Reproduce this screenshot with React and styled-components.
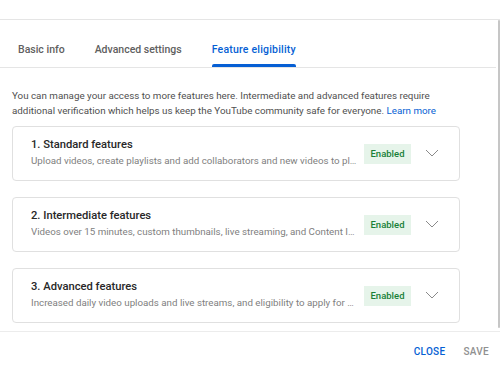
import React from 'react';
import styled, { createGlobalStyle } from 'styled-components';

const GlobalStyle = createGlobalStyle`
  html, body {
    margin: 0;
    padding: 0;
    background: #fff;
  }
  body {
    font-family: Roboto, "Liberation Sans", Arial, sans-serif;
    -webkit-font-smoothing: antialiased;
  }
`;

const Dialog = styled.div`
  width: 500px;
  height: 370px;
  display: flex;
  flex-direction: column;
  background: #fff;
  overflow: hidden;
`;

const TopBar = styled.div`
  height: 19px;
  flex-shrink: 0;
  border-bottom: 1px solid #e5e5e5;
`;

const Body = styled.div`
  display: flex;
  height: 310px;
  flex-shrink: 0;
`;

const Main = styled.div`
  flex: 1;
  min-width: 0;
  display: flex;
  flex-direction: column;
`;

const ScrollTrack = styled.div`
  width: 4px;
  display: flex;
  justify-content: flex-end;
`;

const ScrollThumb = styled.div`
  width: 2px;
  height: 308px;
  background: #c6c6c6;
  border-radius: 1px;
`;

const TabBar = styled.div`
  height: 47px;
  display: flex;
  gap: 30px;
  padding-left: 18px;
  border-bottom: 1px solid #e5e5e5;
`;

const Tab = styled.div`
  position: relative;
  display: flex;
  align-items: center;
  padding-top: 11px;
  font-size: 10.5px;
  font-weight: 500;
  letter-spacing: ${(p) => (p.$active ? '0.2px' : '0')};
  color: ${(p) => (p.$active ? '#065fd4' : '#606060')};

  &::after {
    content: '';
    display: ${(p) => (p.$active ? 'block' : 'none')};
    position: absolute;
    left: 0;
    right: 0;
    bottom: 0;
    height: 3px;
    background: #065fd4;
    border-radius: 2px 2px 0 0;
  }
`;

const Content = styled.div`
  padding: 20px 36px 0 12px;
  display: flex;
  flex-direction: column;
`;

const Intro = styled.p`
  margin: 0 0 8px;
  font-size: 9.8px;
  line-height: 15px;
  color: #505050;
`;

const Link = styled.a`
  color: #065fd4;
  text-decoration: none;
`;

const CardList = styled.div`
  display: flex;
  flex-direction: column;
  gap: 16px;
`;

const Card = styled.div`
  height: 55px;
  box-sizing: border-box;
  border: 1px solid #e0e0e0;
  border-radius: 4px;
  display: flex;
  align-items: center;
  padding: 0 20px 0 18px;
`;

const CardText = styled.div`
  flex: 1;
  min-width: 0;
  display: flex;
  flex-direction: column;
  gap: 2px;
  margin-top: -2px;
`;

const CardTitle = styled.div`
  font-size: 11.2px;
  font-weight: 500;
  line-height: 15px;
  color: #282828;
`;

const CardDesc = styled.div`
  font-size: 9.75px;
  line-height: 14px;
  color: #808080;
  white-space: nowrap;
  overflow: hidden;
  text-overflow: ellipsis;
`;

const Badge = styled.span`
  flex-shrink: 0;
  margin-left: 6px;
  width: 47px;
  height: 20px;
  display: flex;
  align-items: center;
  justify-content: center;
  background: #e6f4ea;
  color: #188038;
  font-size: 9.5px;
  font-weight: 500;
`;

const Chevron = styled.span`
  flex-shrink: 0;
  width: 14px;
  height: 14px;
  margin-left: 14px;
  display: flex;
  align-items: center;
  justify-content: center;
  margin-top: -2px;
`;

const Footer = styled.div`
  flex: 1;
  border-top: 1px solid #ececec;
  display: flex;
  align-items: center;
  justify-content: flex-end;
  gap: 18px;
  padding: 0 11px 0 0;
  margin-top: 1px;
`;

const FooterButton = styled.button`
  border: none;
  background: none;
  padding: 0;
  font-family: Roboto, "Liberation Sans", Arial, sans-serif;
  font-size: 10px;
  font-weight: 500;
  letter-spacing: 0.3px;
  text-transform: uppercase;
  color: ${(p) => (p.$disabled ? '#909090' : '#065fd4')};
  margin-top: 1px;
`;

const features = [
  {
    title: '1. Standard features',
    desc: 'Upload videos, create playlists and add collaborators and new videos to playlists',
  },
  {
    title: '2. Intermediate features',
    desc: 'Videos over 15 minutes, custom thumbnails, live streaming, and Content ID appeals',
  },
  {
    title: '3. Advanced features',
    desc: 'Increased daily video uploads and live streams, and eligibility to apply for monetization',
  },
];

const ChevronIcon = () => (
  <svg width="14" height="8" viewBox="0 0 14 8" fill="none">
    <polyline points="1,1 7,7 13,1" stroke="#8a8a8a" strokeWidth="1" />
  </svg>
);

export default function App() {
  return (
    <>
      <GlobalStyle />
      <Dialog>
        <TopBar />
        <Body>
          <Main>
            <TabBar>
              <Tab>Basic info</Tab>
              <Tab>Advanced settings</Tab>
              <Tab $active>Feature eligibility</Tab>
            </TabBar>
            <Content>
              <Intro>
                You can manage your access to more features here. Intermediate and advanced features require
                additional verification which helps us keep the YouTube community safe for everyone.{' '}
                <Link href="#">Learn more</Link>
              </Intro>
              <CardList>
                {features.map((f) => (
                  <Card key={f.title}>
                    <CardText>
                      <CardTitle>{f.title}</CardTitle>
                      <CardDesc>{f.desc}</CardDesc>
                    </CardText>
                    <Badge>Enabled</Badge>
                    <Chevron>
                      <ChevronIcon />
                    </Chevron>
                  </Card>
                ))}
              </CardList>
            </Content>
          </Main>
          <ScrollTrack>
            <ScrollThumb />
          </ScrollTrack>
        </Body>
        <Footer>
          <FooterButton>Close</FooterButton>
          <FooterButton $disabled>Save</FooterButton>
        </Footer>
      </Dialog>
    </>
  );
}
